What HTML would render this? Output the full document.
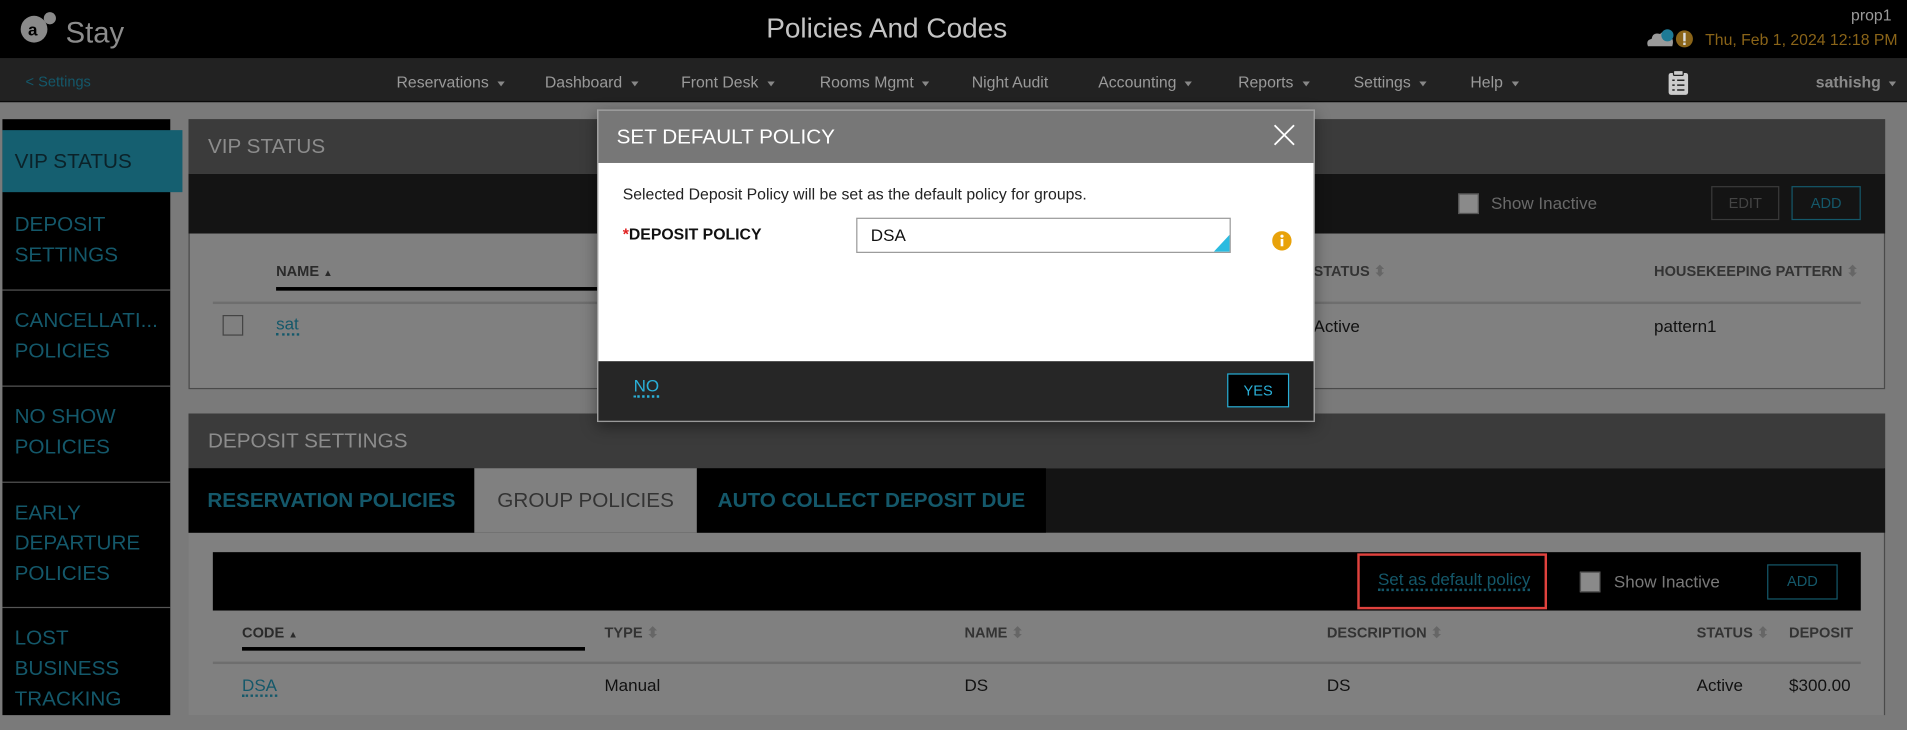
<!DOCTYPE html>
<html><head><meta charset="utf-8">
<style>
html,body{margin:0;padding:0;width:1907px;height:715px;overflow:hidden;background:#7a7a7a;}
#w{position:absolute;left:0;top:0;width:1568px;height:588px;transform:scale(1.2162);transform-origin:0 0;font-family:"Liberation Sans",sans-serif;}
.a{position:absolute;white-space:nowrap;}
.hdr{left:0;top:0;width:1568px;height:48px;background:#000;}
.nav{left:0;top:48px;width:1568px;height:35px;background:#222;border-bottom:1px solid #0a0a0a;}
.nv{top:60px;font-size:13px;color:#9a9a9a;}
.car{display:inline-block;width:0;height:0;border-left:3px solid transparent;border-right:3px solid transparent;border-top:4px solid #888;margin-left:7px;vertical-align:middle;}
.side{left:2px;top:98px;width:138px;height:490px;background:#000;}
.si{left:2px;width:138px;color:#14586a;font-size:17px;line-height:25px;padding-left:10px;box-sizing:border-box;border-bottom:1px solid #555;}
.ph{background:#3b3b3b;color:#8c8c8c;font-size:17px;}
.tb{background:#141414;}
.th{font-size:12px;font-weight:bold;color:#2a2a2a;}
.tl{color:#14586a;border-bottom:2px dotted #14586a;}
.cb{width:15px;height:15px;background:#8a8a8a;border:1px solid #555;}
.btn{border:1px solid #14586a;color:#14586a;font-size:12px;text-align:center;line-height:26px;}
.tab{top:385px;height:53px;line-height:53px;font-size:17px;font-weight:bold;text-align:center;}
</style></head><body><div id="w">
<div class="a hdr"></div>
<svg class="a" style="left:14px;top:8px" width="40" height="36"><circle cx="14" cy="16" r="11" fill="#8a8a8a"/><circle cx="27" cy="7" r="5" fill="#8a8a8a"/><text x="9" y="21" font-size="14" font-family="Liberation Sans" font-weight="bold" fill="#000">a</text></svg>
<div class="a" style="left:54px;top:14px;font-size:24px;color:#8c8c8c">Stay</div>
<div class="a" style="left:630px;top:10px;font-size:23px;color:#c4c4c4">Policies And Codes</div>
<div class="a" style="left:1522px;top:5px;font-size:13px;color:#9a9a9a">prop1</div>
<svg class="a" style="left:1352px;top:22px" width="48" height="20"><path d="M3 16 Q1 11 6 10 Q7 4 13 6 Q16 2 20 8 Q25 9 23 16 Z" fill="#9a9a9a"/><circle cx="19" cy="7" r="5" fill="#1e7a95"/><circle cx="33" cy="10" r="7" fill="#8a6418"/><rect x="32" y="5" width="2" height="7" fill="#ddd"/><rect x="32" y="13" width="2" height="2" fill="#ddd"/></svg>
<div class="a" style="left:1402px;top:25px;font-size:13px;color:#8a6418">Thu, Feb 1, 2024 12:18 PM</div>
<div class="a nav"></div>
<div class="a" style="left:21px;top:60px;font-size:12px;color:#14586a">&lt; Settings</div>
<div class="a nv" style="left:326px">Reservations<span class="car"></span></div>
<div class="a nv" style="left:448px">Dashboard<span class="car"></span></div>
<div class="a nv" style="left:560px">Front Desk<span class="car"></span></div>
<div class="a nv" style="left:674px">Rooms Mgmt<span class="car"></span></div>
<div class="a nv" style="left:799px">Night Audit</div>
<div class="a nv" style="left:903px">Accounting<span class="car"></span></div>
<div class="a nv" style="left:1018px">Reports<span class="car"></span></div>
<div class="a nv" style="left:1113px">Settings<span class="car"></span></div>
<div class="a nv" style="left:1209px">Help<span class="car"></span></div>
<svg class="a" style="left:1371px;top:57px" width="18" height="22"><rect x="1" y="3" width="16" height="18" rx="2" fill="#ccc"/><rect x="5" y="1" width="8" height="4" rx="1" fill="#ccc" stroke="#222"/><path d="M4 9h2M8 9h6M4 13h2M8 13h6M4 17h2M8 17h6" stroke="#222" stroke-width="1.2"/></svg>
<div class="a nv" style="left:1493px;font-weight:bold;color:#8a8a8a">sathishg<span class="car"></span></div>

<div class="a side"></div>
<div class="a" style="left:2px;top:107px;width:148px;height:51px;background:#155f70;color:#0b2229;font-size:17px;line-height:51px;padding-left:10px;box-sizing:border-box">VIP STATUS</div>
<div class="a si" style="top:160px;height:79px;padding-top:12px">DEPOSIT<br>SETTINGS</div>
<div class="a si" style="top:239px;height:79px;padding-top:12px">CANCELLATI...<br>POLICIES</div>
<div class="a si" style="top:318px;height:79px;padding-top:12px">NO SHOW<br>POLICIES</div>
<div class="a si" style="top:397px;height:103px;padding-top:12px">EARLY<br>DEPARTURE<br>POLICIES</div>
<div class="a si" style="top:500px;height:100px;padding-top:12px;border:none">LOST<br>BUSINESS<br>TRACKING</div>

<div class="a" style="left:155px;top:98px;width:1395px;height:222px;background:#808080;border:1px solid #4a4a4a;box-sizing:border-box"></div>
<div class="a ph" style="left:155px;top:98px;width:1395px;height:45px;line-height:45px;padding-left:16px;box-sizing:border-box">VIP STATUS</div>
<div class="a tb" style="left:155px;top:143px;width:1395px;height:49px"></div>
<div class="a cb" style="left:1199px;top:159px"></div>
<div class="a" style="left:1226px;top:159px;font-size:14px;color:#6a6a6a">Show Inactive</div>
<div class="a btn" style="left:1407px;top:153px;width:54px;height:26px;border-color:#3a3a3a;color:#444">EDIT</div>
<div class="a btn" style="left:1473px;top:153px;width:55px;height:26px">ADD</div>
<div class="a th" style="left:227px;top:216px">NAME <span style="font-size:8px">▲</span></div>
<div class="a" style="left:227px;top:236px;width:600px;height:3px;background:#000"></div>
<div class="a th" style="left:1080px;top:216px;color:#333">STATUS <span style="color:#666">⬍</span></div>
<div class="a th" style="left:1360px;top:216px;color:#333">HOUSEKEEPING PATTERN <span style="color:#666">⬍</span></div>
<div class="a" style="left:175px;top:248px;width:1355px;height:2px;background:#6e6e6e"></div>
<div class="a" style="left:183px;top:259px;width:17px;height:17px;border:1px solid #444;box-sizing:border-box"></div>
<div class="a tl" style="left:227px;top:258px;font-size:14px">sat</div>
<div class="a" style="left:1080px;top:260px;font-size:14px;color:#111">Active</div>
<div class="a" style="left:1360px;top:260px;font-size:14px;color:#111">pattern1</div>

<div class="a" style="left:155px;top:340px;width:1395px;height:248px;background:#808080;border-right:1px solid #4a4a4a;box-sizing:border-box"></div>
<div class="a ph" style="left:155px;top:340px;width:1395px;height:45px;line-height:45px;padding-left:16px;box-sizing:border-box">DEPOSIT SETTINGS</div>
<div class="a tb" style="left:155px;top:385px;width:1395px;height:53px"></div>
<div class="a tab" style="left:155px;width:235px;background:#000;color:#14586a">RESERVATION POLICIES</div>
<div class="a tab" style="left:390px;width:183px;background:#808080;color:#333;font-weight:normal">GROUP POLICIES</div>
<div class="a tab" style="left:573px;width:287px;background:#000;color:#14586a">AUTO COLLECT DEPOSIT DUE</div>
<div class="a" style="left:175px;top:454px;width:1355px;height:48px;background:#000"></div>
<div class="a" style="left:1116px;top:455px;width:156px;height:46px;border:2px solid #e0423e;box-sizing:border-box"></div>
<div class="a tl" style="left:1133px;top:468px;font-size:14px">Set as default policy</div>
<div class="a cb" style="left:1299px;top:470px"></div>
<div class="a" style="left:1327px;top:470px;font-size:14px;color:#7a7a7a">Show Inactive</div>
<div class="a btn" style="left:1453px;top:464px;width:56px;height:27px">ADD</div>
<div class="a th" style="left:199px;top:513px">CODE <span style="font-size:8px">▲</span></div>
<div class="a" style="left:199px;top:532px;width:282px;height:3px;background:#000"></div>
<div class="a th" style="left:497px;top:513px;color:#333">TYPE <span style="color:#666">⬍</span></div>
<div class="a th" style="left:793px;top:513px;color:#333">NAME <span style="color:#666">⬍</span></div>
<div class="a th" style="left:1091px;top:513px;color:#333">DESCRIPTION <span style="color:#666">⬍</span></div>
<div class="a th" style="left:1395px;top:513px;color:#333">STATUS <span style="color:#666">⬍</span></div>
<div class="a th" style="left:1471px;top:513px;color:#333">DEPOSIT</div>
<div class="a" style="left:175px;top:544px;width:1355px;height:2px;background:#6e6e6e"></div>
<div class="a tl" style="left:199px;top:555px;font-size:14px">DSA</div>
<div class="a" style="left:497px;top:555px;font-size:14px;color:#111">Manual</div>
<div class="a" style="left:793px;top:555px;font-size:14px;color:#111">DS</div>
<div class="a" style="left:1091px;top:555px;font-size:14px;color:#111">DS</div>
<div class="a" style="left:1395px;top:555px;font-size:14px;color:#111">Active</div>
<div class="a" style="left:1471px;top:555px;font-size:14px;color:#111">$300.00</div>

<div class="a" style="left:491px;top:90px;width:590px;height:257px;border:1px solid #999;box-sizing:border-box;box-shadow:0 4px 12px rgba(0,0,0,.4);background:#fff"></div>
<div class="a" style="left:492px;top:91px;width:588px;height:43px;background:#777;color:#fff;font-size:17px;line-height:43px;padding-left:15px;box-sizing:border-box">SET DEFAULT POLICY</div>
<svg class="a" style="left:1047px;top:102px" width="18" height="18"><path d="M1 1L17 17M17 1L1 17" stroke="#fff" stroke-width="1.5"/></svg>
<div class="a" style="left:512px;top:152px;font-size:13px;color:#222">Selected Deposit Policy will be set as the default policy for groups.</div>
<div class="a" style="left:512px;top:185px;font-size:13px;font-weight:bold;color:#111"><span style="color:#e02020">*</span>DEPOSIT POLICY</div>
<div class="a" style="left:704px;top:179px;width:308px;height:29px;border:1px solid #999;box-sizing:border-box;font-size:14px;line-height:27px;padding-left:11px;color:#111">DSA</div>
<svg class="a" style="left:998px;top:193px" width="13" height="14"><path d="M13 0L13 14L0 14Z" fill="#2abbe0"/></svg>
<svg class="a" style="left:1046px;top:190px" width="16" height="16"><circle cx="8" cy="8" r="8" fill="#e8a20a"/><rect x="7" y="6.5" width="2.2" height="6" fill="#fff"/><circle cx="8.1" cy="4.2" r="1.3" fill="#fff"/></svg>
<div class="a" style="left:492px;top:297px;width:588px;height:49px;background:#262626"></div>
<div class="a" style="left:521px;top:309px;font-size:14px;color:#2ab0d8;border-bottom:2px dotted #2ab0d8">NO</div>
<div class="a" style="left:1009px;top:307px;width:51px;height:28px;background:#000;border:1px solid #2ab0d8;box-sizing:border-box;color:#2ab0d8;font-size:12px;text-align:center;line-height:26px">YES</div>
</div></body></html>
